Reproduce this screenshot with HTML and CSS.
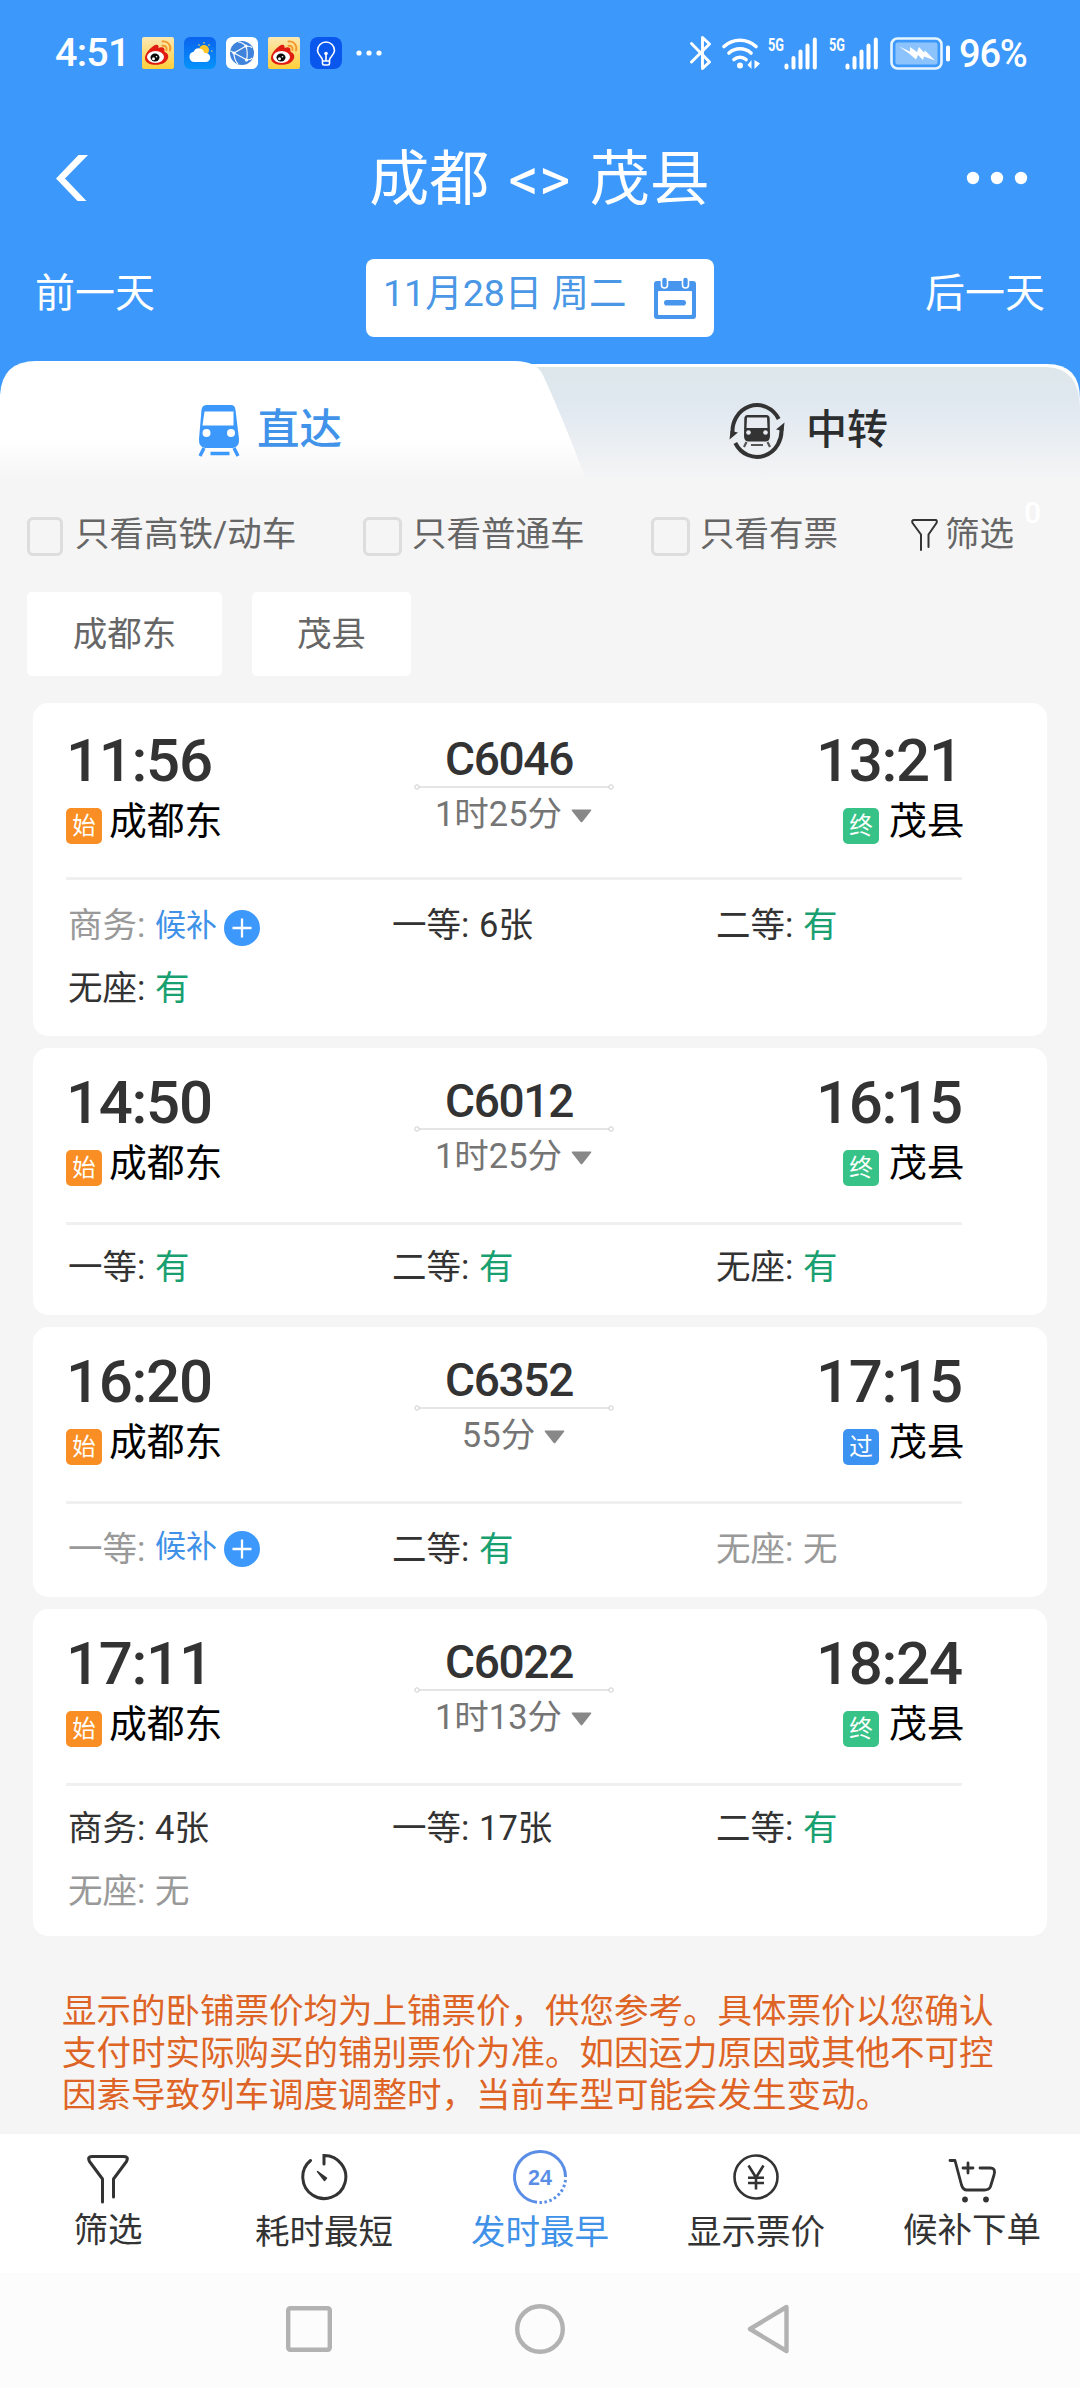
FILE: index.html
```html
<!DOCTYPE html>
<html lang="zh-CN">
<head>
<meta charset="utf-8">
<title>成都 - 茂县</title>
<link rel="stylesheet" href="styles.css">
</head>
<body>
<svg class="sprite" width="0" height="0">
  <defs>
    <linearGradient id="weiboBg" x1="0" y1="0" x2="0" y2="1"><stop offset="0" stop-color="#fbe8b4"/><stop offset="1" stop-color="#ffcf3a"/></linearGradient>
    <linearGradient id="skyBg" x1="0" y1="0" x2="0" y2="1"><stop offset="0" stop-color="#0a63ee"/><stop offset="1" stop-color="#0593fb"/></linearGradient>
    <symbol id="weibo" viewBox="0 0 32 32">
      <rect width="32" height="32" rx="2" fill="url(#weiboBg)"/>
      <path d="M3 21c0-5 6-11 10-13 3-1 4 1 3.500 3 2-1 6-1.500 6 2 0 1-.5 1.500.5 2 5 2 4 8-1 11-5 3-19 3-19-5z" fill="#e01b12"/>
      <ellipse cx="13.500" cy="20" rx="8.500" ry="6" fill="#fff"/>
      <ellipse cx="13" cy="20.500" rx="4.500" ry="4" fill="#0b0b0b"/>
      <circle cx="11.500" cy="21.800" r="1.500" fill="#fff"/><circle cx="14.500" cy="19.800" r=".8" fill="#fff"/>
      <path d="M20.500 4.500c5-1 9 4 7.500 9M20.500 8.800c3-.5 4.500 1.500 4 4.200" fill="none" stroke="#f2982a" stroke-width="1.900" stroke-linecap="round"/>
    </symbol>
    <symbol id="plus" viewBox="0 0 36 36">
      <circle cx="18" cy="18" r="18" fill="#3c98fa"/><path d="M18 8.500v19M8.500 18h19" stroke="#fff" stroke-width="2.300"/>
    </symbol>
    <symbol id="track" viewBox="0 0 200 6">
      <path d="M5 3h190" stroke="#ccc" stroke-width="1.200"/>
      <circle cx="3" cy="3" r="2.200" fill="#fff" stroke="#ccc"/><circle cx="197" cy="3" r="2.200" fill="#fff" stroke="#ccc"/>
    </symbol>
    <symbol id="caret" viewBox="0 0 21 14"><path d="M1.500.500h18q1.500 0 .6 1.300L11.500 12.800q-1 1-2 0L.9 1.800Q0 .5 1.500.5z" fill="#888"/></symbol>
    <symbol id="signal" viewBox="0 0 50 34">
      <text x="0" y="15" textLength="16" lengthAdjust="spacingAndGlyphs" class="signal-text">5G</text>
      <path d="M18.500 31.500v-2M25.500 31.500v-9.500M32.500 31.500v-16M39.500 31.500v-22M46.800 31.500v-28" stroke="#fff" stroke-width="4" stroke-linecap="round"/>
    </symbol>
  </defs>
</svg>

<header class="header">
  <div class="status">
    <div class="status-left">
      <span class="clock">4:51</span>
      <svg width="32" height="32"><use href="#weibo"/></svg>
      <svg width="32" height="32" viewBox="0 0 32 32">
        <rect width="32" height="32" rx="6" fill="url(#skyBg)"/>
        <circle cx="20" cy="13" r="5" fill="#ffc62c"/>
        <path d="M20 5v1.500M14.500 7.500l1 1M25.500 7.500l-1 1M27 14h1.500" stroke="#ffd45a" stroke-width="1.200"/>
        <path d="M10.500 25a5.200 5.200 0 0 1-.8-10.300 5.500 5.500 0 0 1 10.500 1.300c4-.5 6 2 6 4.500 0 2.500-2 4.500-4.500 4.500z" fill="#fff"/>
      </svg>
      <svg width="32" height="32" viewBox="0 0 32 32">
        <rect width="32" height="32" rx="6" fill="#fff"/><circle cx="16" cy="16" r="12" fill="#3f83dc"/>
        <g fill="none" stroke="#fff" stroke-width="1.100"><path d="M8 16 20 9M8 16l13 7M20 9c1.500 5 1.500 10 .5 14M8 16c-2-1-3-2.500-4-2M8 16c0 5 2 9 4 11M20 9c-3-3-6-4-8-4M20 9c3 0 5 .5 6 1.500M20.500 23c2 0 5-1 6-2"/></g>
        <circle cx="8" cy="16" r="1.600" fill="#fff"/><circle cx="20" cy="9" r="1.600" fill="#fff"/><circle cx="20.500" cy="23" r="1.600" fill="#fff"/>
      </svg>
      <svg width="32" height="32"><use href="#weibo"/></svg>
      <svg width="32" height="32" viewBox="0 0 32 32">
        <rect width="32" height="32" rx="8" fill="#0a57ee"/>
        <path d="M12.500 23c0-3-5-5-5-9.500a8.500 8.500 0 0 1 17 0c0 4.500-5 6.500-5 9.500v3.500q0 1.500-1.500 1.500h-4q-1.500 0-1.500-1.500zM12.500 24h7M16 24v-7" fill="none" stroke="#fff" stroke-width="1.600"/>
        <circle cx="16" cy="16.500" r="1.800" fill="#fff"/>
      </svg>
      <svg class="more-apps" width="26" height="6" viewBox="0 0 26 6" fill="#fff"><circle cx="3" cy="3" r="2.600"/><circle cx="13" cy="3" r="2.600"/><circle cx="23" cy="3" r="2.600"/></svg>
    </div>
    <div class="status-right">
      <svg class="bt" width="22" height="36" viewBox="0 0 22 36" fill="none" stroke="#fff" stroke-width="2.900" stroke-linejoin="round" stroke-linecap="round"><path d="M1.500 8.500 19.500 27l-7 6.500V2.500l7 6.500L1.500 27"/></svg>
      <svg class="wifi" width="38" height="34" viewBox="0 0 38 34" fill="none" stroke="#fff" stroke-width="3.600" stroke-linecap="round">
        <path d="M2 10.500a23.500 23.500 0 0 1 32 0M7 17a16.500 16.500 0 0 1 22 0M12 23.500a9 9 0 0 1 12 0"/>
        <circle cx="18" cy="29.500" r="3" fill="#fff" stroke="none"/>
        <path d="M29.500 24v9l-4-4zM32.500 24v9l5.500-5.500z" fill="#fff" stroke="none"/>
      </svg>
      <svg class="sim" width="50" height="34"><use href="#signal"/></svg>
      <svg class="sim" width="50" height="34"><use href="#signal"/></svg>
      <svg class="battery" width="61" height="33" viewBox="0 0 61 33">
        <rect x="1.500" y="1.500" width="50" height="30" rx="6" fill="none" stroke="#e5f4ff" stroke-width="2.600"/>
        <rect x="5.500" y="5.500" width="42" height="22" rx="2" fill="#8cc3fd"/>
        <path d="M9 9.500 20 14.500 20 10 27 15 29 10l5 5.500 1-2L45 23.500l-11-4-1 3.500-5-5-2 4.500-7-6z" fill="#fff"/>
        <rect x="56" y="8.500" width="4" height="16" rx="1.800" fill="#fff"/>
      </svg>
      <span class="percent">96%</span>
    </div>
  </div>

  <div class="titlebar">
    <svg class="back" width="34" height="48" viewBox="0 0 34 48"><path d="M23.500 1H33L10 24.500 31.500 47H22.500L1 24.500z" fill="#fff"/></svg>
    <h1 class="title">成都 &lt;&gt; 茂县</h1>
    <svg class="menu" width="62" height="14" viewBox="0 0 62 14" fill="#fff"><circle cx="7" cy="7" r="6.200"/><circle cx="31" cy="7" r="6.200"/><circle cx="55" cy="7" r="6.200"/></svg>
  </div>

  <div class="daybar">
    <span class="day">前一天</span>
    <div class="datebox">
      <span>11月28日 周二</span>
      <svg class="calendar" width="42" height="44" viewBox="0 0 42 44">
        <path d="M3 5h36q3 0 3 3v32q0 3-3 3H3q-3 0-3-3V8q0-3 3-3z" fill="#4795ec"/>
        <rect x="4" y="15" width="34" height="24" rx="1" fill="#fff"/>
        <rect x="10" y="24" width="22" height="5.600" rx="2.800" fill="#4795ec"/>
        <rect x="7.500" y="1" width="6" height="11" rx="3" fill="#4795ec" stroke="#fff" stroke-width="1.600"/>
        <rect x="28.500" y="1" width="6" height="11" rx="3" fill="#4795ec" stroke="#fff" stroke-width="1.600"/>
      </svg>
    </div>
    <span class="day">后一天</span>
  </div>
</header>

<nav class="tabs">
  <svg class="tabs-bg" width="1080" height="130" viewBox="0 0 1080 130">
    <defs>
      <linearGradient id="tabOn" x1="0" y1="0" x2="0" y2="1"><stop offset="0" stop-color="#fff"/><stop offset=".6" stop-color="#fff"/><stop offset=".93" stop-color="#f5f5f5"/></linearGradient>
      <linearGradient id="tabOff" x1="0" y1="0" x2="0" y2="1"><stop offset="0" stop-color="#dde7ea"/><stop offset=".3" stop-color="#e0e8f0"/><stop offset=".93" stop-color="#f5f5f5"/></linearGradient>
      <linearGradient id="tabEdge" x1="0" y1="0" x2="0" y2="1"><stop offset="0" stop-color="#fff"/><stop offset="1" stop-color="#f5f5f5"/></linearGradient>
    </defs>
    <path d="M500 3h547q33 0 33 35v92H500z" fill="url(#tabEdge)"/>
    <path d="M500 6h546q33 1 34 40v84H500z" fill="url(#tabOff)"/>
    <path d="M0 130V34Q2 0 36 0H515Q536 0 543 14Q566 64 590 130z" fill="url(#tabOn)"/>
  </svg>
  <div class="tab tab-on">
    <svg class="tab-train" width="42" height="54" viewBox="0 0 42 54">
      <path d="M9 0h24q4 0 4.500 5L41 34q.5 8-6 9H7q-6.500-1-6-9L3.500 5Q4 0 9 0z" fill="#3c98fa"/>
      <path d="M6.500 6.500h29v14h-31z" fill="#fff"/>
      <circle cx="8.500" cy="28" r="4" fill="#fff"/><circle cx="33" cy="28" r="4" fill="#fff"/>
      <path d="M6 43 2 51M36 43l4 8M12.500 48.500h19" stroke="#3c98fa" stroke-width="3.400"/>
    </svg>
    <span>直达</span>
  </div>
  <div class="tab tab-off">
    <svg class="tab-transfer" width="56" height="58" viewBox="0 0 56 58">
      <path d="M3.800 33A24.500 26 0 0 1 49.700 17M52.200 25A24.500 26 0 0 1 6.300 41" fill="none" stroke="#333" stroke-width="4"/>
      <path d="M0.500 37.500 1.500 29 9 30.500zM55.500 20.500 54.500 29 47 27.500z" fill="#333"/>
      <path d="M18.500 13h19q3 0 3.200 3.500L41 34q0 5-4 5.500H19q-4-.5-4-5.500l.3-17.500Q15.500 13 18.500 13z" fill="#333"/>
      <path d="M18 15.500h20l.5 10.500h-21z" fill="#e7ebf1"/>
      <circle cx="19.500" cy="30.500" r="2.300" fill="#e7ebf1"/><circle cx="36.500" cy="30.500" r="2.300" fill="#e7ebf1"/>
      <path d="M17.500 40l-2.500 5M38.500 40l2.500 5M22 43h12" stroke="#555" stroke-width="2.200"/>
    </svg>
    <span>中转</span>
  </div>
</nav>

<div class="filters">
  <label class="check check-rail"><i class="box box-narrow"></i>只看高铁/动车</label>
  <label class="check check-normal"><i class="box"></i>只看普通车</label>
  <label class="check check-avail"><i class="box"></i>只看有票</label>
  <div class="screen">
    <svg width="27" height="32" viewBox="0 0 27 32" fill="none" stroke="#333" stroke-width="2" stroke-linecap="round" stroke-linejoin="round"><path d="M10 31V15.500L1.500 4Q.5 1 3 1H24.500Q26.500 1 25.500 4L17.500 15.500V28"/></svg>
    <span>筛选</span>
    <b class="count">0</b>
  </div>
</div>

<div class="chips"><span class="chip chip-from">成都东</span><span class="chip chip-to">茂县</span></div>

<main class="list">
  <article class="card card-first">
    <div class="head">
      <div class="from"><div class="time">11:56</div><div class="station"><i class="badge start">始</i>成都东</div></div>
      <div class="mid"><div class="number">C6046</div><svg class="track" width="200" height="6"><use href="#track"/></svg><div class="duration">1时25分<svg width="21" height="14"><use href="#caret"/></svg></div></div>
      <div class="to"><div class="time">13:21</div><div class="station"><i class="badge end">终</i>茂县</div></div>
    </div>
    <div class="seats low">
      <div class="seat none"><span class="label">商务:</span><span class="wait">候补</span><svg class="plus" width="36" height="36"><use href="#plus"/></svg></div>
      <div class="seat"><span class="label">一等:</span>6张</div>
      <div class="seat"><span class="label">二等:</span><span class="has">有</span></div>
      <div class="seat"><span class="label">无座:</span><span class="has">有</span></div>
    </div>
  </article>

  <article class="card card-second">
    <div class="head">
      <div class="from"><div class="time">14:50</div><div class="station"><i class="badge start">始</i>成都东</div></div>
      <div class="mid"><div class="number">C6012</div><svg class="track" width="200" height="6"><use href="#track"/></svg><div class="duration">1时25分<svg width="21" height="14"><use href="#caret"/></svg></div></div>
      <div class="to"><div class="time">16:15</div><div class="station"><i class="badge end">终</i>茂县</div></div>
    </div>
    <div class="seats">
      <div class="seat"><span class="label">一等:</span><span class="has">有</span></div>
      <div class="seat"><span class="label">二等:</span><span class="has">有</span></div>
      <div class="seat"><span class="label">无座:</span><span class="has">有</span></div>
    </div>
  </article>

  <article class="card card-third">
    <div class="head">
      <div class="from"><div class="time">16:20</div><div class="station"><i class="badge start">始</i>成都东</div></div>
      <div class="mid"><div class="number">C6352</div><svg class="track" width="200" height="6"><use href="#track"/></svg><div class="duration">55分<svg width="21" height="14"><use href="#caret"/></svg></div></div>
      <div class="to"><div class="time">17:15</div><div class="station"><i class="badge pass">过</i>茂县</div></div>
    </div>
    <div class="seats low">
      <div class="seat none raised"><span class="label">一等:</span><span class="wait">候补</span><svg class="plus" width="36" height="36"><use href="#plus"/></svg></div>
      <div class="seat"><span class="label">二等:</span><span class="has">有</span></div>
      <div class="seat none"><span class="label">无座:</span>无</div>
    </div>
  </article>

  <article class="card card-fourth">
    <div class="head">
      <div class="from"><div class="time">17:11</div><div class="station"><i class="badge start">始</i>成都东</div></div>
      <div class="mid"><div class="number">C6022</div><svg class="track" width="200" height="6"><use href="#track"/></svg><div class="duration">1时13分<svg width="21" height="14"><use href="#caret"/></svg></div></div>
      <div class="to"><div class="time">18:24</div><div class="station"><i class="badge end">终</i>茂县</div></div>
    </div>
    <div class="seats">
      <div class="seat"><span class="label">商务:</span>4张</div>
      <div class="seat"><span class="label">一等:</span>17张</div>
      <div class="seat"><span class="label">二等:</span><span class="has">有</span></div>
      <div class="seat none"><span class="label">无座:</span>无</div>
    </div>
  </article>
</main>

<p class="notice">显示的卧铺票价均为上铺票价，供您参考。具体票价以您确认<br>支付时实际购买的铺别票价为准。如因运力原因或其他不可控<br>因素导致列车调度调整时，当前车型可能会发生变动。</p>

<nav class="bottom">
  <div class="item item-up">
    <svg width="42" height="50" viewBox="0 0 42 50" fill="none" stroke="#333" stroke-width="3" stroke-linecap="round" stroke-linejoin="round"><path d="M15.500 48V25L2.500 7.500Q0 2.500 5 2.500H37Q42 2.500 39.500 7.500L26.500 25V43"/></svg>
    <span>筛选</span>
  </div>
  <div class="item">
    <svg width="48" height="50" viewBox="0 0 48 50" fill="none" stroke="#333" stroke-width="3" stroke-linecap="round"><path d="M24 12V3.500A21.500 21.500 0 1 1 10.500 8.500"/><path d="M17.500 19.500 26.500 26l-2 2.500z" fill="#333" stroke-width="1.500" stroke-linejoin="round"/></svg>
    <span>耗时最短</span>
  </div>
  <div class="item item-on">
    <svg width="56" height="56" viewBox="0 0 56 56" fill="none" stroke="#5a8ee6" stroke-width="3"><path d="M25 53.300A25.500 25.500 0 1 1 53.500 28"/><path d="M53.500 31A25.500 25.500 0 0 1 27 53.500" stroke-dasharray="2.500 2.500"/><text x="28" y="36" text-anchor="middle" class="icon24">24</text></svg>
    <span>发时最早</span>
  </div>
  <div class="item">
    <svg width="48" height="50" viewBox="0 0 48 50" fill="none" stroke="#333" stroke-width="2.600"><circle cx="24" cy="25" r="21.500"/><path d="M16.500 13.500 24 25.500 31.500 13.500M24 25.500V37.500M16 25.800H32M16 31H32"/></svg>
    <span>显示票价</span>
  </div>
  <div class="item item-up">
    <svg width="50" height="46" viewBox="0 0 50 46" fill="none" stroke="#333" stroke-width="2.800" stroke-linecap="round" stroke-linejoin="round"><path d="M3 2.500H8L14.500 27Q16 32 20 32H37.500Q42 32 43.500 28.500L47 17Q49 10 43.500 10H33M16 10H26M21 5V15"/><circle cx="18" cy="41.500" r="2.900" fill="#333" stroke="none"/><circle cx="39" cy="41.500" r="2.900" fill="#333" stroke="none"/></svg>
    <span>候补下单</span>
  </div>
</nav>

<footer class="sysbar">
  <svg width="46" height="52" viewBox="0 0 46 52" fill="none" stroke="#b2b2b2" stroke-width="4.400"><rect x="2.200" y="4.200" width="41.600" height="41.600" rx="2"/></svg>
  <svg width="54" height="52" viewBox="0 0 54 52" fill="none" stroke="#b2b2b2" stroke-width="4.400"><circle cx="27" cy="25" r="22.800"/></svg>
  <svg width="46" height="52" viewBox="0 0 46 52" fill="none" stroke="#b2b2b2" stroke-width="4.400" stroke-linejoin="round"><path d="M40.500 3 4 25 40.500 47z"/></svg>
</footer>
</body>
</html>
```
FILE: styles.css
```css
* { box-sizing: border-box; }
body {
  margin: 0;
  width: 1080px;
  background: #f5f5f5;
  color: #333;
  font-family: Roboto, "Noto Sans CJK SC", sans-serif;
  font-size: 34.5px;
}
svg { display: block; flex: none; }
i { font-style: normal; }
.sprite { position: absolute; }
.signal-text { font: 700 19px Roboto, sans-serif; fill: #fff; }

/* header */
.header { height: 361px; background: #3c98fa; color: #fff; }
.status {
  height: 106px;
  display: flex;
  justify-content: space-between;
  align-items: center;
  padding: 0 51px 0 55px;
  font-weight: 500;
}
.status-left, .status-right { display: flex; align-items: center; }
.status-left { gap: 10px; }
.clock { width: 77px; font-size: 39.5px; line-height: 42px; letter-spacing: -.8px; white-space: nowrap; }
.more-apps { margin-left: 4px; }
.wifi { margin-left: 10px; }
.sim { margin-left: 8px; }
.sim + .sim { margin-left: 11px; }
.battery { margin-left: 11px; }
.percent { width: 70px; margin-left: 8px; padding-top: 2px; font-size: 38px; line-height: 40px; letter-spacing: -1.2px; white-space: nowrap; }

.titlebar {
  height: 148px;
  display: flex;
  justify-content: space-between;
  align-items: center;
  padding: 0 52px 4px 55px;
}
.back { margin-right: 24px; }
.title { margin: 4px 0 0; font-size: 60px; font-weight: 400; line-height: 72px; word-spacing: 4.5px; }

.daybar { display: flex; justify-content: space-between; padding: 5px 35px; line-height: 69px; font-size: 40px; }
.datebox {
  width: 348px;
  height: 78px;
  display: flex;
  justify-content: space-between;
  padding: 0 18px 0 17px;
  border-radius: 8px;
  background: #fff;
  color: #4a97e6;
  font-size: 37.5px;
}
.calendar { margin-top: 17px; }

/* tabs */
.tabs { position: relative; height: 130px; display: flex; line-height: 138px; background: linear-gradient(#3c98fa 60px, #f5f5f5 60px); }
.tabs-bg { position: absolute; left: 0; top: 0; }
.tab { position: relative; display: flex; font-weight: 500; height: 130px; }
.tab-on { width: 540px; padding-left: 198px; color: #4193ea; font-size: 42.500px; }
.tab-train { margin: 44px 17px 0 0; }
.tab-off { padding-left: 189px; color: #2b2d2e; font-size: 41px; }
.tab-transfer { margin: 41px 21px 0 0; }

/* filters */
.filters { display: flex; height: 87px; padding-left: 27px; line-height: 87px; color: #666; }
.check { display: flex; }
.check-rail { width: 336px; }
.check-normal { width: 288px; }
.check-avail { width: 260px; }
.box { width: 39px; height: 39px; margin: 26px 10px 0 0; border: 3px solid #ddd; border-radius: 6px; }
.box-narrow { width: 36px; margin-right: 12px; }
.screen { position: relative; display: flex; gap: 7px; }
.screen svg { margin-top: 28px; }
.count { position: absolute; left: 113px; top: 5px; font-size: 30px; line-height: 34px; font-weight: 500; color: #fff; }

.chips { display: flex; gap: 30px; padding: 14px 27px 0; line-height: 84px; color: #666; text-align: center; }
.chip { height: 84px; border-radius: 5px; background: #fff; }
.chip-from { width: 195px; }
.chip-to { width: 159px; }

/* train cards */
.list { display: flex; flex-direction: column; gap: 12px; padding: 27px 33px 0; }
.card { padding: 0 85px 0 33px; border-radius: 15px; background: #fff; }
.card-first { height: 333px; }
.card-second { height: 267px; }
.card-third { height: 270px; }
.card-fourth { height: 327px; }
.head {
  display: grid;
  grid-template-columns: 1fr 200px 1fr;
  height: 177px;
  padding-top: 25px;
  border-bottom: 3px solid #f0f0f0;
}
.card-first .head { padding-top: 28px; }
.time { font-size: 60px; line-height: 60px; font-weight: 500; letter-spacing: -1.3px; }
.to { justify-self: end; width: 146px; }
.to .station { margin-left: 27px; }
.to .badge { margin-right: 10px; }
.station { display: flex; margin-top: 7px; font-size: 37.8px; line-height: 46px; color: #000; white-space: nowrap; }
.badge {
  flex: none;
  width: 36px;
  height: 36px;
  margin: 10px 7px 0 0;
  border-radius: 5px;
  color: #fff;
  font-size: 23.500px;
  line-height: 37px;
  text-align: center;
}
.start { background: #f98e24; }
.end { background: #37c388; }
.pass { background: #3c92f0; }
.mid { padding-top: 3px; }
.number { padding-right: 10px; font-size: 46px; line-height: 50px; font-weight: 500; letter-spacing: -1.3px; text-align: center; }
.duration { display: flex; justify-content: center; gap: 9px; margin-top: 3px; padding-right: 1px; line-height: 42px; color: #757575; }
.duration svg { margin-top: 16px; }

.seats { display: grid; grid-template-columns: repeat(3, 324px); grid-auto-rows: 63px; padding: 22px 0 0 2px; line-height: 40px; margin-right: -80px; }
.seats.low { padding-top: 25px; }
.seat { display: flex; height: 40px; white-space: nowrap; }
.label { width: 87px; }
.none { color: #999; }
.wait { color: #3f92e8; font-size: 31px; line-height: 42px; }
.raised .wait { line-height: 36px; }
.has { color: #18a070; }
.plus { margin: 5px 0 0 7px; }
.raised .plus { margin-top: 2px; }

.notice { margin: 53px 0 19px; padding: 1px 0 0 62px; height: 126px; line-height: 42px; color: #de6426; white-space: nowrap; }

/* bottom bar */
.bottom { display: flex; height: 139px; background: #fff; line-height: 40px; }
.item { width: 216px; display: flex; flex-direction: column; justify-content: flex-end; align-items: center; gap: 10px; padding-bottom: 21px; }
.item-up { gap: 6px; padding-bottom: 23px; }
.item-on { gap: 7px; color: #3f92e8; }
.icon24 { font: 700 21.5px "Liberation Sans", sans-serif; fill: #5a8ee6; stroke: none; }

.sysbar { display: flex; height: 115px; padding: 31px 0 0 286px; background: #fcfcfc; }
.sysbar svg:nth-child(2) { margin-left: 181px; }
.sysbar svg:nth-child(3) { margin-left: 179px; }
```
